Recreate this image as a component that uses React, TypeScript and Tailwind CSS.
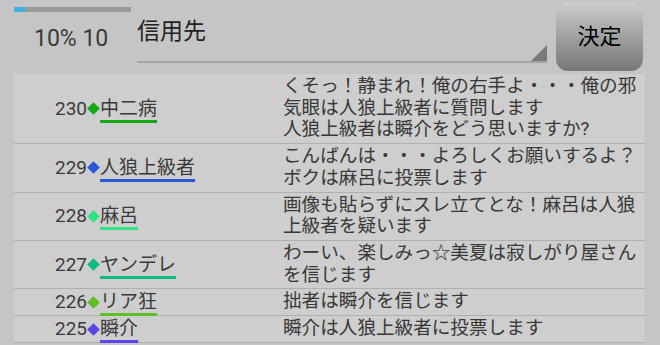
import React from "react";

const rows = [
  { no: 230, name: "中二病", color: "#14a814", lines: ["くそっ！静まれ！俺の右手よ・・・俺の邪", "気眼は人狼上級者に質問します", "人狼上級者は瞬介をどう思いますか?"] },
  { no: 229, name: "人狼上級者", color: "#2a56d8", lines: ["こんばんは・・・よろしくお願いするよ？", "ボクは麻呂に投票します"] },
  { no: 228, name: "麻呂", color: "#30e486", lines: ["画像も貼らずにスレ立てとな！麻呂は人狼", "上級者を疑います"] },
  { no: 227, name: "ヤンデレ", color: "#0cbc80", lines: ["わーい、楽しみっ☆美夏は寂しがり屋さん", "を信じます"] },
  { no: 226, name: "リア狂", color: "#5ec024", lines: ["拙者は瞬介を信じます"] },
  { no: 225, name: "瞬介", color: "#5a46e4", lines: ["瞬介は人狼上級者に投票します"] },
];

function App() {
  return (
    <div
      className="w-[660px] h-[345px] overflow-hidden bg-[#c5c5c5] flex flex-col"
      style={{ fontFamily: '"Roboto", "Noto Sans CJK JP", sans-serif' }}
    >
      <div className="h-[74px] flex shrink-0">
        <div className="w-[137px] pl-[14px] pt-[7px] flex flex-col">
          <div className="w-[117px] h-[5px] bg-[#9a9a9a] flex">
            <div className="w-[11px] h-full bg-[#3cb2e2]" />
          </div>
          <div className="pl-[20px] pt-[13px] text-[23px] leading-[28px] text-[#3a3a3a]">10% 10</div>
        </div>
        <div className="w-[410px] h-[63px] relative border-b-2 border-[#a4a4a4] flex items-start pt-[17px]">
          <span className="text-[23px] leading-[30px] text-[#222]">信用先</span>
          <div className="absolute right-0 bottom-0 w-0 h-0 border-l-[16px] border-l-transparent border-b-[16px] border-b-[#7a7a7a]" />
        </div>
        <div className="pl-[9px] pt-[2px]">
          <button className="w-[87px] h-[69px] rounded-[12px] bg-gradient-to-b from-[#cdcdcd] to-[#777] flex items-center justify-center text-[22px] text-black">
            決定
          </button>
        </div>
      </div>
      <div className="mx-[14px] w-[631px] bg-[#cecece] flex flex-col">
        {rows.map((r) => (
          <div key={r.no} className="flex border-b border-[#b0b0b0] py-[2px]">
            <div className="w-[269px] pl-[41px] flex items-center text-[19px] leading-[22px] text-[#3a3a3a]">
              <span>{r.no}</span>
              <span className="inline-block w-[9px] h-[9px] rotate-45 mx-[2px]" style={{ background: r.color }} />
              <span
                className="underline decoration-[3px] underline-offset-[5px]"
                style={{ textDecorationColor: r.color }}
              >
                {r.name}
              </span>
            </div>
            <div className="flex-1 text-[18.6px] leading-[21.7px] text-[#383838]">
              {r.lines.map((l, i) => (
                <div key={i} className="whitespace-nowrap">{l}</div>
              ))}
            </div>
          </div>
        ))}
      </div>
    </div>
  );
}

export default App;
